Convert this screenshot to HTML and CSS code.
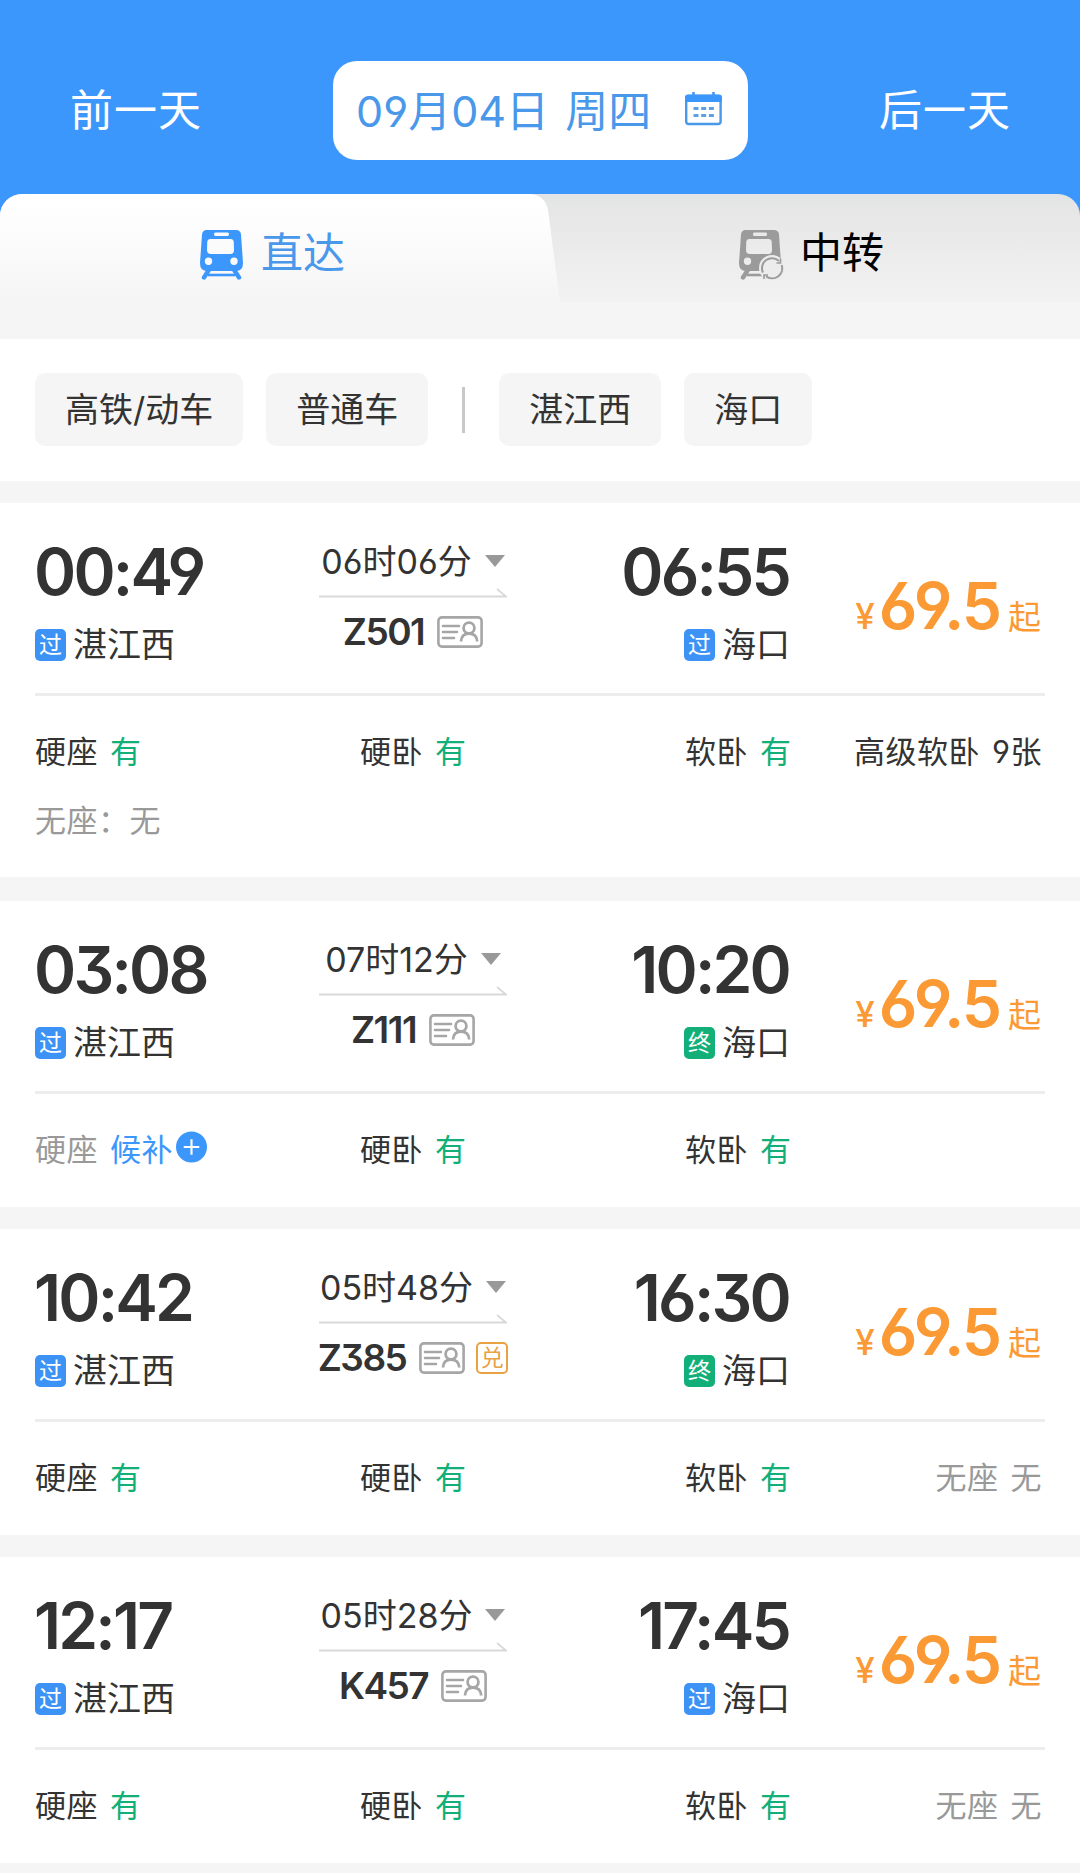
FILE: index.html
```html
<!DOCTYPE html>
<html lang="zh-CN">

<head>
    <meta charset="UTF-8" />
    <meta name="viewport" content="width=device-width, initial-scale=1.0" />
    <title>湛江西 - 海口</title>
    <link rel="stylesheet" href="styles.css">
</head>

<body>
    <!-- shared icons -->
    <svg class="sprite" width="0" height="0">
        <symbol id="icon-id" viewBox="0 0 46 32">
            <rect x="1.4" y="1.4" width="43.2" height="29.2" rx="3.5" fill="none" stroke="#a6a6a6" stroke-width="2.6" />
            <path d="M6 10H22M6 16H20M6 22H17" fill="none" stroke="#a6a6a6" stroke-width="2.6" stroke-linecap="round" />
            <circle cx="32" cy="12" r="5.4" fill="none" stroke="#a6a6a6" stroke-width="2.8" />
            <path d="M24 25.5C24.3 20.5 27 17.7 32 17.7S39.900 20.5 40.2 25.5" fill="none" stroke="#a6a6a6" stroke-width="2.8" />
        </symbol>
        <symbol id="icon-arrow" viewBox="0 0 188 10">
            <path d="M0 8.5H187L178 1" fill="none" stroke="#d9d9d9" stroke-width="1.8" />
        </symbol>
    </svg>

    <div class="app">
        <header class="date-bar">
            <a class="day-link">前一天</a>
            <div class="date-picker">
                <span>09月04日 周四</span>
                <svg class="calendar" viewBox="0 0 37 34" width="37" height="34">
                    <path d="M8.5 0V6M28.5 0V6" stroke="#4a98ea" stroke-width="2.6" />
                    <rect x="1.2" y="4" width="34.4" height="28" rx="2.5" fill="none" stroke="#4a98ea" stroke-width="2.4" />
                    <path d="M0 10V5Q0 2.5 3 2.5H34Q37 2.5 37 5V10Z" fill="#3c97fd" />
                    <path d="M8.5 16.5H29M8.5 23.5H29" stroke="#5b9fe6" stroke-width="3" stroke-dasharray="5 2.7" />
                </svg>
            </div>
            <a class="day-link">后一天</a>
        </header>

        <nav class="tabs">
            <div class="tab tab-active">
                <svg class="tab-shape" viewBox="0 0 562 108" width="562" height="108">
                    <defs>
                        <linearGradient id="tab-fade" x1="0" y1="0" x2="0" y2="1">
                            <stop offset="0" stop-color="#ffffff" />
                            <stop offset="0.2" stop-color="#fefefe" />
                            <stop offset="1" stop-color="#f5f5f5" />
                        </linearGradient>
                    </defs>
                    <path d="M0 0H530Q545 1 548 16L560 108H0Z" fill="url(#tab-fade)" />
                </svg>
                <svg class="train" viewBox="0 0 43 50" width="43" height="50">
                    <path fill="#3c97fd" fill-rule="evenodd" d="M6.500 0H36Q40.500 0 41 4.500L43 33Q43 41 36 41H7Q0 41 0 33L2 4.500Q2.500 0 6.500 0ZM15.500 2.500Q14 2.500 14 4.200T15.500 6H27.500Q29 6 29 4.200T27.500 2.500ZM10 9Q7.500 9 7.300 11.500L7 20Q7 24 11 24H30.500Q34 24 34 20L33.700 11.500Q33.500 9 31 9ZM8.500 27.500A3.700 3.700 0 1 0 8.500 34.900A3.700 3.700 0 1 0 8.500 27.500ZM34 27.500A3.700 3.700 0 1 0 34 34.900A3.700 3.700 0 1 0 34 27.500Z" />
                    <path d="M9.500 39L4 47.500M33.500 39L39 47.500" stroke="#3c97fd" stroke-width="4.400" stroke-linecap="round" />
                    <path d="M8 45H35" stroke="#3c97fd" stroke-width="2.600" />
                </svg>
                <span>直达</span>
            </div>
            <div class="tab tab-transfer">
                <svg class="train" viewBox="0 0 45 50" width="45" height="50">
                    <path fill="#9b9b9b" fill-rule="evenodd" d="M6.500 0H35Q39.500 0 40 4.500L42 33Q42 41 35 41H7Q0 41 0 33L2 4.500Q2.500 0 6.500 0ZM15 2.500Q14 2.500 14 4.200T15 6H27Q28 6 28 4.200T27 2.500ZM10 9Q7.500 9 7.300 11.500L7 20Q7 24 11 24H29.500Q33 24 33 20L32.700 11.500Q32.500 9 30 9ZM8.500 27.500A3.700 3.700 0 1 0 8.500 34.900A3.700 3.700 0 1 0 8.500 27.500Z" />
                    <path d="M9.500 39L4 47.500" stroke="#9b9b9b" stroke-width="4.400" stroke-linecap="round" />
                    <path d="M8 45H24" stroke="#9b9b9b" stroke-width="2.600" />
                    <circle cx="33" cy="38" r="13" fill="#ececec" />
                    <path d="M24 42.500A10 10 0 0 1 40 31M42.600 35A10 10 0 0 1 27 46.200" fill="none" stroke="#9b9b9b" stroke-width="2" />
                    <path d="M41.500 28.500V33H37.500M25 49V45H29" fill="none" stroke="#9b9b9b" stroke-width="1.600" />
                </svg>
                <span>中转</span>
            </div>
        </nav>

        <div class="filters">
            <button class="chip">高铁/动车</button>
            <button class="chip">普通车</button>
            <i class="filter-sep"></i>
            <button class="chip">湛江西</button>
            <button class="chip">海口</button>
        </div>

        <main class="trips">
            <section class="trip">
                <div class="trip-main">
                    <div class="stop">
                        <div class="time">00:49</div>
                        <div class="station"><b class="badge">过</b>湛江西</div>
                    </div>
                    <div class="middle">
                        <div class="duration">06时06分<i class="caret"></i></div>
                        <svg class="arrow"><use href="#icon-arrow" /></svg>
                        <div class="train-no">Z501<svg class="id-card"><use href="#icon-id" /></svg></div>
                    </div>
                    <div class="stop stop-end">
                        <div class="time">06:55</div>
                        <div class="station"><b class="badge">过</b>海口</div>
                    </div>
                    <div class="price"><small>¥</small><strong>69.5</strong><em>起</em></div>
                </div>
                <div class="seats">
                    <div class="seat">硬座<span class="ok">有</span></div>
                    <div class="seat">硬卧<span class="ok">有</span></div>
                    <div class="seat">软卧<span class="ok">有</span></div>
                    <div class="seat seat-last">高级软卧<span>9张</span></div>
                    <div class="seat none">无座：无</div>
                </div>
            </section>

            <section class="trip">
                <div class="trip-main">
                    <div class="stop">
                        <div class="time">03:08</div>
                        <div class="station"><b class="badge">过</b>湛江西</div>
                    </div>
                    <div class="middle">
                        <div class="duration">07时12分<i class="caret"></i></div>
                        <svg class="arrow"><use href="#icon-arrow" /></svg>
                        <div class="train-no">Z111<svg class="id-card"><use href="#icon-id" /></svg></div>
                    </div>
                    <div class="stop stop-end">
                        <div class="time">10:20</div>
                        <div class="station"><b class="badge badge-end">终</b>海口</div>
                    </div>
                    <div class="price"><small>¥</small><strong>69.5</strong><em>起</em></div>
                </div>
                <div class="seats">
                    <div class="seat none">硬座<span class="wait">候补</span>
                        <svg class="plus" viewBox="0 0 32 32" width="31" height="32">
                            <circle cx="16" cy="16" r="16" fill="#3c97fd" />
                            <path d="M16 8V24M8 16H24" stroke="#fff" stroke-width="2.2" />
                        </svg>
                    </div>
                    <div class="seat">硬卧<span class="ok">有</span></div>
                    <div class="seat">软卧<span class="ok">有</span></div>
                </div>
            </section>

            <section class="trip">
                <div class="trip-main">
                    <div class="stop">
                        <div class="time">10:42</div>
                        <div class="station"><b class="badge">过</b>湛江西</div>
                    </div>
                    <div class="middle">
                        <div class="duration">05时48分<i class="caret"></i></div>
                        <svg class="arrow"><use href="#icon-arrow" /></svg>
                        <div class="train-no">Z385<svg class="id-card"><use href="#icon-id" /></svg><b class="redeem">兑</b></div>
                    </div>
                    <div class="stop stop-end">
                        <div class="time">16:30</div>
                        <div class="station"><b class="badge badge-end">终</b>海口</div>
                    </div>
                    <div class="price"><small>¥</small><strong>69.5</strong><em>起</em></div>
                </div>
                <div class="seats">
                    <div class="seat">硬座<span class="ok">有</span></div>
                    <div class="seat">硬卧<span class="ok">有</span></div>
                    <div class="seat">软卧<span class="ok">有</span></div>
                    <div class="seat seat-last none">无座<span>无</span></div>
                </div>
            </section>

            <section class="trip">
                <div class="trip-main">
                    <div class="stop">
                        <div class="time">12:17</div>
                        <div class="station"><b class="badge">过</b>湛江西</div>
                    </div>
                    <div class="middle">
                        <div class="duration">05时28分<i class="caret"></i></div>
                        <svg class="arrow"><use href="#icon-arrow" /></svg>
                        <div class="train-no">K457<svg class="id-card"><use href="#icon-id" /></svg></div>
                    </div>
                    <div class="stop stop-end">
                        <div class="time">17:45</div>
                        <div class="station"><b class="badge">过</b>海口</div>
                    </div>
                    <div class="price"><small>¥</small><strong>69.5</strong><em>起</em></div>
                </div>
                <div class="seats">
                    <div class="seat">硬座<span class="ok">有</span></div>
                    <div class="seat">硬卧<span class="ok">有</span></div>
                    <div class="seat">软卧<span class="ok">有</span></div>
                    <div class="seat seat-last none">无座<span>无</span></div>
                </div>
            </section>
        </main>
    </div>
</body>

</html>
```

FILE: styles.css
```css
* {
    box-sizing: border-box;
}

body {
    margin: 0;
    font-family: Inter, "Noto Sans CJK SC", sans-serif;
    font-feature-settings: "cv03", "cv04", "cv09";
    background: #f5f5f5;
    color: #333;
}

.sprite {
    position: absolute;
}

.app {
    width: 1080px;
    height: 1873px;
    overflow: hidden;
    background: linear-gradient(#3c97fd 220px, #f5f5f5 220px);
}

/* date bar */
.date-bar {
    height: 194px;
    padding: 61px 69px 0 70px;
    display: flex;
    justify-content: space-between;
    align-items: flex-start;
    font-size: 43px;
    line-height: 98px;
    color: #fff;
}

.day-link {
    letter-spacing: 1px;
}

.date-picker {
    width: 415px;
    height: 99px;
    padding: 0 26px 0 23px;
    display: flex;
    align-items: center;
    justify-content: space-between;
    border-radius: 24px;
    background: #fff;
    color: #4a98ea;
    word-spacing: 4px;
    white-space: nowrap;
}

.calendar {
    margin-top: -3px;
}

/* tabs */
.tabs {
    height: 145px;
    display: flex;
    border-radius: 22px 22px 0 0;
    overflow: hidden;
    background: linear-gradient(#e2e4e5 0, #e6e6e6 14px, #f2f2f2 108px, #f5f5f5 108px);
}

.tab {
    position: relative;
    width: 50%;
    height: 121px;
    display: flex;
    align-items: center;
    font-size: 42px;
    color: #000;
}

.tab-active {
    padding-left: 200px;
    color: #4a98ea;
}

.tab-transfer {
    padding-left: 199px;
}

.tab-shape {
    position: absolute;
    left: 0;
    top: 0;
}

.tab .train {
    position: relative;
    margin-right: 18px;
}

.tab-transfer .train {
    margin-right: 16px;
}

.tab span {
    position: relative;
    line-height: 60px;
    margin-top: -3px;
}

/* filters */
.filters {
    height: 142px;
    padding: 34px 35px 35px;
    display: flex;
    align-items: center;
    gap: 23px;
    background: #fff;
}

.chip {
    height: 73px;
    padding: 1px 30px 0;
    border: 0;
    border-radius: 10px;
    background: #f5f5f5;
    color: #333;
    font: inherit;
    font-size: 34px;
    line-height: 72px;
}

.filter-sep {
    width: 3px;
    height: 46px;
    margin: 0 11px;
    background: #c8c8c8;
}

/* trips */
.trips {
    padding-top: 22px;
    display: flex;
    flex-direction: column;
    gap: 22px;
}

.trip {
    padding: 0 35px;
    background: #fff;
}

.trip:first-child {
    margin-bottom: 2px;
}

.trip-main {
    height: 193px;
    display: flex;
    border-bottom: 3px solid #ededed;
}

.stop {
    width: 284px;
    padding-top: 37px;
}

.stop-end {
    width: 283px;
    display: flex;
    flex-direction: column;
    align-items: flex-end;
}

.time {
    margin-left: -1px;
    font-size: 64px;
    font-weight: 600;
    line-height: 64px;
    letter-spacing: -2.8px;
}

.stop-end .time {
    margin-right: 1px;
}

.station {
    margin-top: 24px;
    display: flex;
    align-items: center;
    font-size: 34px;
    line-height: 34px;
}

.badge {
    width: 31px;
    height: 32px;
    margin-right: 7px;
    border-radius: 5px;
    background: #3c93f5;
    color: #fff;
    font-size: 23px;
    font-weight: 400;
    line-height: 32px;
    text-align: center;
}

.badge-end {
    background: #12b078;
}

.middle {
    width: 188px;
    padding-top: 38px;
    display: flex;
    flex-direction: column;
    align-items: center;
}

.duration {
    display: flex;
    align-items: center;
    font-size: 34px;
    line-height: 41px;
    white-space: nowrap;
}

.caret {
    margin-left: 13px;
    margin-top: -1px;
    border: 10px solid transparent;
    border-top: 12px solid #999;
    border-bottom: 0;
}

.arrow {
    width: 188px;
    height: 10px;
    margin-top: 6px;
}

.train-no {
    margin-top: 18px;
    display: flex;
    align-items: center;
    font-size: 37px;
    font-weight: 600;
    line-height: 32px;
    letter-spacing: -1.5px;
}

.id-card {
    width: 46px;
    height: 32px;
    margin-left: 13px;
}

.redeem {
    width: 32px;
    height: 32px;
    margin-left: 11px;
    border: 2px solid #e9a243;
    border-radius: 5px;
    color: #e9a243;
    font-size: 23px;
    font-weight: 400;
    line-height: 28px;
    letter-spacing: 0;
    text-align: center;
}

.price {
    flex: 1;
    padding: 71px 4px 0 0;
    display: flex;
    justify-content: flex-end;
    align-items: baseline;
    line-height: 64px;
    color: #fb9a34;
}

.price small {
    margin-right: 5px;
    font-size: 35px;
    font-weight: 500;
    letter-spacing: -1px;
}

.price strong {
    font-size: 64px;
    font-weight: 600;
    letter-spacing: -2px;
}

.price em {
    margin-left: 8px;
    font-size: 33px;
    font-style: normal;
}

/* seats */
.seats {
    padding: 18px 0 25px;
    display: grid;
    grid-template-columns: 325px 325px 160px 198px;
}

.seat {
    height: 70px;
    display: flex;
    align-items: center;
    font-size: 31px;
    letter-spacing: 0.5px;
    white-space: nowrap;
}

.seat:nth-child(n + 5) {
    height: 68px;
}

.seat span {
    margin-left: 12px;
}

.seat-last {
    justify-content: flex-end;
    padding-right: 1px;
}

.none {
    color: #999;
}

.ok {
    color: #12b078;
}

.wait {
    color: #3c97fd;
}

.plus {
    margin-left: 3px;
}
```
